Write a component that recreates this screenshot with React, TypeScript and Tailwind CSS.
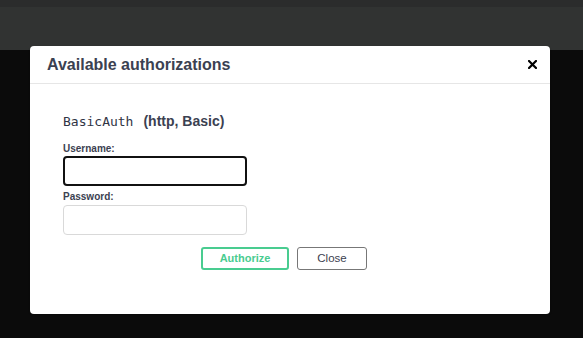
import React from 'react';

const App: React.FC = () => {
  return (
    <div className="relative w-full h-[338px] bg-[#0b0b0b] overflow-hidden" style={{ fontFamily: '"Liberation Sans", Arial, sans-serif' }}>
      {/* Dimmed top bar behind overlay */}
      <div className="h-[50px] bg-[#313332]">
        <div className="h-[7px] bg-[#2b2c2c]" />
      </div>

      {/* Modal */}
      <div className="absolute left-[30px] top-[46px] w-[520px] h-[268px] bg-white rounded-[4px] shadow-[0_1px_2px_rgba(0,0,0,0.3)] flex flex-col">
        <header className="h-[38px] shrink-0 border-b border-[#e6e6e6] flex items-center justify-between pl-[17px] pr-[13px]">
          <h3 className="text-[16px] font-bold text-[#3b4151]">Available authorizations</h3>
          <button className="w-[10px] h-[10px] flex items-center justify-center">
            <svg width="9" height="9" viewBox="0 0 9 9">
              <path d="M1 1L8 8M8 1L1 8" stroke="#000" strokeWidth="2.2" strokeLinecap="square" />
            </svg>
          </button>
        </header>

        <div className="pl-[33px] pr-[45px] pt-[27px]">
          <h4 className="text-[14px] leading-[20px] font-bold text-[#3b4151] flex items-baseline">
            <code className="font-normal text-[13px] text-[#2f3444]" style={{ fontFamily: '"DejaVu Sans Mono", "Liberation Mono", monospace' }}>BasicAuth</code>
            <span className="ml-[10px]">(http, Basic)</span>
          </h4>

          <div className="mt-[11px]">
            <label className="block text-[10px] leading-[12px] font-bold text-[#3b4151]">Username:</label>
            <input
              type="text"
              className="mt-[1px] block w-[184px] h-[30px] rounded-[4px] border-2 border-[#111] outline-none px-[8px] text-[12px]"
            />
          </div>

          <div className="mt-[5px]">
            <label className="block text-[10px] leading-[12px] font-bold text-[#3b4151]">Password:</label>
            <input
              type="password"
              className="mt-[2px] block w-[184px] h-[30px] rounded-[4px] border border-[#d9d9d9] outline-none px-[8px] text-[12px]"
            />
          </div>

          <div className="mt-[12px] flex justify-center gap-[8px]">
            <button className="w-[88px] h-[23px] rounded-[3px] border-2 border-[#49cc90] text-[#49cc90] text-[11px] font-bold">
              Authorize
            </button>
            <button className="w-[70px] h-[23px] rounded-[3px] border-[1.5px] border-[#777] text-[#3b4151] text-[11.5px]">
              Close
            </button>
          </div>
        </div>
      </div>
    </div>
  );
};

export default App;
